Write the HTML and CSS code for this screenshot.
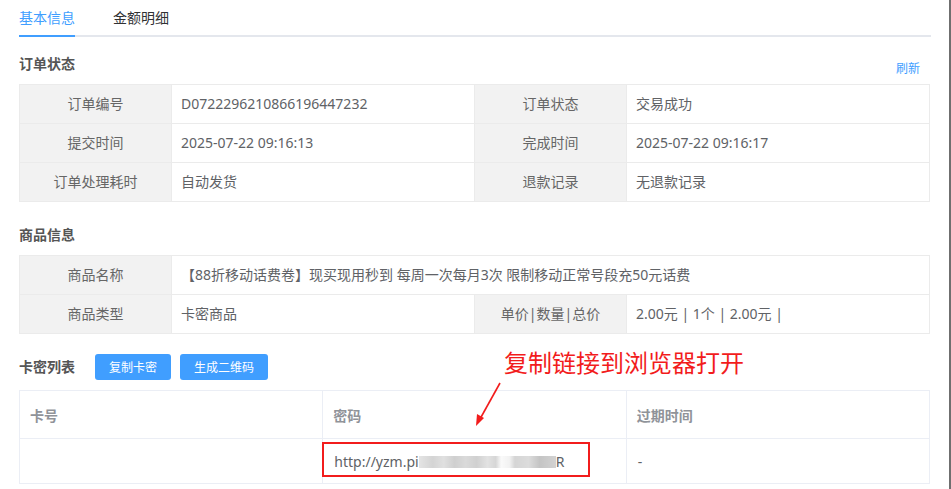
FILE: index.html
```html
<!DOCTYPE html>
<html lang="zh-CN">
<head>
    <meta charset="UTF-8">
    <meta name="viewport" content="width=device-width, initial-scale=1.0">
    <title>订单详情</title>
    <link rel="stylesheet" href="styles.css">
</head>
<body>
    <div class="page">
        <div class="tabs">
            <div class="tab active"><span>基本信息</span></div>
            <div class="tab"><span>金额明细</span></div>
        </div>

        <div class="section-head first">
            <h3>订单状态</h3>
            <a class="refresh">刷新</a>
        </div>
        <table class="info-table">
            <colgroup>
                <col class="label-col"><col class="value-col"><col class="label-col"><col class="value-col">
            </colgroup>
            <tr>
                <td class="label">订单编号</td>
                <td>D0722296210866196447232</td>
                <td class="label">订单状态</td>
                <td>交易成功</td>
            </tr>
            <tr>
                <td class="label">提交时间</td>
                <td>2025-07-22 09:16:13</td>
                <td class="label">完成时间</td>
                <td>2025-07-22 09:16:17</td>
            </tr>
            <tr>
                <td class="label">订单处理耗时</td>
                <td>自动发货</td>
                <td class="label">退款记录</td>
                <td>无退款记录</td>
            </tr>
        </table>

        <div class="section-head">
            <h3>商品信息</h3>
        </div>
        <table class="info-table">
            <colgroup>
                <col class="label-col"><col class="value-col"><col class="label-col"><col class="value-col">
            </colgroup>
            <tr>
                <td class="label">商品名称</td>
                <td colspan="3">【88折移动话费卷】现买现用秒到 每周一次每月3次 限制移动正常号段充50元话费</td>
            </tr>
            <tr>
                <td class="label">商品类型</td>
                <td>卡密商品</td>
                <td class="label">单价|数量|总价</td>
                <td>2.00元 | 1个 | 2.00元 |</td>
            </tr>
        </table>

        <div class="section-head cards-head">
            <h3>卡密列表</h3>
            <button class="btn">复制卡密</button>
            <button class="btn">生成二维码</button>
        </div>
        <table class="card-table">
            <thead>
                <tr>
                    <th>卡号</th>
                    <th>密码</th>
                    <th>过期时间</th>
                </tr>
            </thead>
            <tbody>
                <tr>
                    <td></td>
                    <td>http://yzm.pi<span class="blur"></span>R</td>
                    <td class="dash">-</td>
                </tr>
            </tbody>
        </table>

        <!-- screenshot annotation -->
        <div class="note">复制链接到浏览器打开</div>
        <svg class="note-arrow" width="40" height="50" viewBox="0 0 40 50">
            <line x1="32" y1="2" x2="12" y2="38" stroke="#f21c1c" stroke-width="1.6"/>
            <polygon points="8,45 9,33 16,37" fill="#f21c1c"/>
        </svg>
        <div class="note-box"></div>
    </div>
</body>
</html>
```

FILE: styles.css
```css
html {
    background: #fff;
}

body {
    margin: 0;
    font-family: "Noto Sans", "Noto Sans CJK SC", sans-serif;
    font-size: 14px;
    color: #606266;
    border-right: 2px solid #6f6f6f;
    min-height: 489px;
    box-sizing: border-box;
}

.page {
    position: relative;
    padding: 0 19px 0 19px;
    width: 912px;
}

.tabs {
    display: flex;
    height: 35px;
    border-bottom: 2px solid #e4e7ed;
}

.tab {
    margin-right: 38px;
    line-height: 35px;
    color: #303133;
}

.tab span {
    display: inline-block;
    height: 35px;
    position: relative;
}

.tab.active {
    color: #409eff;
}

.tab.active span::after {
    content: "";
    position: absolute;
    left: 0;
    right: 0;
    bottom: -2px;
    height: 2px;
    background: #409eff;
}

.section-head {
    display: flex;
    align-items: center;
    height: 20px;
    margin: 23px 0 10px;
}

.section-head.first {
    margin-top: 17px;
}

.section-head h3 {
    margin: 0;
    font-size: 14px;
    font-weight: bold;
    color: #555;
    line-height: 20px;
}

.refresh {
    margin-left: auto;
    margin-right: 11px;
    align-self: flex-end;
    margin-bottom: -3px;
    font-size: 12px;
    line-height: 16px;
    color: #409eff;
    cursor: pointer;
}

.cards-head {
    height: 26px;
    margin: 20px 0 10px;
}

.btn {
    height: 26px;
    padding: 0 14px;
    margin-left: 9px;
    border: none;
    border-radius: 3px;
    background: #409eff;
    color: #fff;
    font-family: inherit;
    font-size: 12px;
    cursor: pointer;
}

.cards-head h3 + .btn {
    margin-left: 20px;
}

.info-table,
.card-table {
    width: 911px;
    border-collapse: collapse;
    table-layout: fixed;
}

.label-col {
    width: 152px;
}

.value-col {
    width: 303px;
}

.info-table td {
    height: 38px;
    padding: 0 9px;
    border: 1px solid #ebebeb;
    line-height: 20px;
    white-space: nowrap;
    color: #606266;
}

.info-table td.label {
    background: #f2f2f2;
    text-align: center;
    color: #666;
}

.card-table th,
.card-table td {
    border: 1px solid #ebeef5;
    padding: 0 10px;
    text-align: left;
}

.card-table th {
    height: 47px;
    font-weight: 600;
    color: #909399;
}

.card-table td {
    height: 44px;
    padding-left: 11px;
    color: #606266;
}

.card-table td.dash {
    color: #606266;
}

.blur {
    display: inline-block;
    width: 137px;
    height: 12px;
    vertical-align: -1px;
    background: linear-gradient(90deg,
        #e4e4e4 0, #d4d4d4 10%, #e0e0e0 18%, #cfcfcf 26%, #dadada 34%,
        #d0d0d0 42%, #e2e2e2 50%, #d6d6d6 56%, #fafafa 60%, #f2f2f2 66%,
        #d5d5d5 70%, #dcdcdc 80%, #c4c4c4 88%, #d2d2d2 100%);
    filter: blur(0.6px);
}

.note {
    position: absolute;
    left: 504px;
    top: 348px;
    font-size: 24px;
    line-height: 30px;
    color: #f21c1c;
    letter-spacing: 0;
}

.note-arrow {
    position: absolute;
    left: 468px;
    top: 381px;
}

.note-box {
    position: absolute;
    left: 322px;
    top: 442px;
    width: 264px;
    height: 31px;
    border: 2px solid #f21c1c;
}
```
